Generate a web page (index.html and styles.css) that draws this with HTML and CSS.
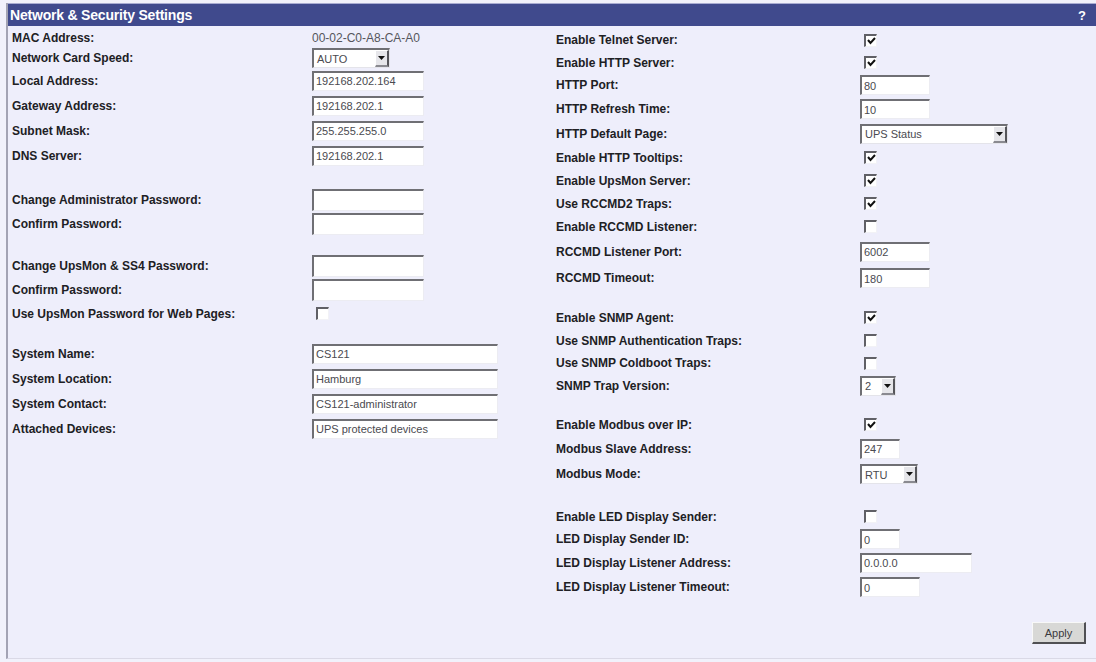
FILE: index.html
```html
<!DOCTYPE html>
<html>
<head>
<meta charset="utf-8">
<title>Network &amp; Security Settings</title>
<link rel="stylesheet" href="styles.css">
</head>
<body>
<div class="panel">
  <div class="titlebar">
    <span class="title">Network &amp; Security Settings</span>
    <span class="help">?</span>
  </div>
  <div class="content">
    <div class="col col-left">
      <div class="row h20"><span class="label">MAC Address:</span><span class="static">00-02-C0-A8-CA-A0</span></div>
      <div class="row h20"><span class="label">Network Card Speed:</span>
        <div class="select w78"><span class="sel-text">AUTO</span><span class="sel-btn"><svg width="7" height="4" viewBox="0 0 7 4"><polygon points="0,0 7,0 3.5,4" fill="#111"/></svg></span></div></div>
      <div class="row h25"><span class="label">Local Address:</span><input class="field w112" type="text" value="192168.202.164"></div>
      <div class="row h25"><span class="label">Gateway Address:</span><input class="field w112" type="text" value="192168.202.1"></div>
      <div class="row h25"><span class="label">Subnet Mask:</span><input class="field w112" type="text" value="255.255.255.0"></div>
      <div class="row h25"><span class="label">DNS Server:</span><input class="field w112" type="text" value="192168.202.1"></div>
      <div class="sp20"></div>
      <div class="row h24"><span class="label">Change Administrator Password:</span><input class="field w112 tall" type="password" value=""></div>
      <div class="row h24"><span class="label">Confirm Password:</span><input class="field w112 tall" type="password" value=""></div>
      <div class="sp18"></div>
      <div class="row h24"><span class="label">Change UpsMon &amp; SS4 Password:</span><input class="field w112 tall" type="password" value=""></div>
      <div class="row h24"><span class="label">Confirm Password:</span><input class="field w112 tall" type="password" value=""></div>
      <div class="row h23"><span class="label">Use UpsMon Password for Web Pages:</span><span class="cb"></span></div>
      <div class="sp16"></div>
      <div class="row h25"><span class="label">System Name:</span><input class="field w186" type="text" value="CS121"></div>
      <div class="row h25"><span class="label">System Location:</span><input class="field w186" type="text" value="Hamburg"></div>
      <div class="row h25"><span class="label">System Contact:</span><input class="field w186" type="text" value="CS121-administrator"></div>
      <div class="row h25"><span class="label">Attached Devices:</span><input class="field w186" type="text" value="UPS protected devices"></div>
    </div>
    <div class="col col-right">
      <div class="row h24"><span class="label">Enable Telnet Server:</span><span class="cb checked"><svg width="9" height="8" viewBox="0 0 9 8"><polyline points="1,3 3.5,6 8,1" fill="none" stroke="#111" stroke-width="2"/></svg></span></div>
      <div class="row h21"><span class="label">Enable HTTP Server:</span><span class="cb checked"><svg width="9" height="8" viewBox="0 0 9 8"><polyline points="1,3 3.5,6 8,1" fill="none" stroke="#111" stroke-width="2"/></svg></span></div>
      <div class="row h24"><span class="label">HTTP Port:</span><input class="field w70" type="text" value="80"></div>
      <div class="row h24"><span class="label">HTTP Refresh Time:</span><input class="field w70" type="text" value="10"></div>
      <div class="row h25"><span class="label">HTTP Default Page:</span>
        <div class="select w148"><span class="sel-text">UPS Status</span><span class="sel-btn"><svg width="7" height="4" viewBox="0 0 7 4"><polygon points="0,0 7,0 3.5,4" fill="#111"/></svg></span></div></div>
      <div class="row h23"><span class="label">Enable HTTP Tooltips:</span><span class="cb checked"><svg width="9" height="8" viewBox="0 0 9 8"><polyline points="1,3 3.5,6 8,1" fill="none" stroke="#111" stroke-width="2"/></svg></span></div>
      <div class="row h23"><span class="label">Enable UpsMon Server:</span><span class="cb checked"><svg width="9" height="8" viewBox="0 0 9 8"><polyline points="1,3 3.5,6 8,1" fill="none" stroke="#111" stroke-width="2"/></svg></span></div>
      <div class="row h23"><span class="label">Use RCCMD2 Traps:</span><span class="cb checked"><svg width="9" height="8" viewBox="0 0 9 8"><polyline points="1,3 3.5,6 8,1" fill="none" stroke="#111" stroke-width="2"/></svg></span></div>
      <div class="row h23"><span class="label">Enable RCCMD Listener:</span><span class="cb"></span></div>
      <div class="row h27"><span class="label">RCCMD Listener Port:</span><input class="field w70" type="text" value="6002"></div>
      <div class="row h26"><span class="label">RCCMD Timeout:</span><input class="field w70" type="text" value="180"></div>
      <div class="sp15"></div>
      <div class="row h23"><span class="label">Enable SNMP Agent:</span><span class="cb checked"><svg width="9" height="8" viewBox="0 0 9 8"><polyline points="1,3 3.5,6 8,1" fill="none" stroke="#111" stroke-width="2"/></svg></span></div>
      <div class="row h23"><span class="label">Use SNMP Authentication Traps:</span><span class="cb"></span></div>
      <div class="row h22"><span class="label">Use SNMP Coldboot Traps:</span><span class="cb"></span></div>
      <div class="row h23"><span class="label">SNMP Trap Version:</span>
        <div class="select w36"><span class="sel-text">2</span><span class="sel-btn"><svg width="7" height="4" viewBox="0 0 7 4"><polygon points="0,0 7,0 3.5,4" fill="#111"/></svg></span></div></div>
      <div class="sp16"></div>
      <div class="row h23"><span class="label">Enable Modbus over IP:</span><span class="cb checked"><svg width="9" height="8" viewBox="0 0 9 8"><polyline points="1,3 3.5,6 8,1" fill="none" stroke="#111" stroke-width="2"/></svg></span></div>
      <div class="row h25"><span class="label">Modbus Slave Address:</span><input class="field w40" type="text" value="247"></div>
      <div class="row h26"><span class="label">Modbus Mode:</span>
        <div class="select w58"><span class="sel-text">RTU</span><span class="sel-btn"><svg width="7" height="4" viewBox="0 0 7 4"><polygon points="0,0 7,0 3.5,4" fill="#111"/></svg></span></div></div>
      <div class="sp18"></div>
      <div class="row h23"><span class="label">Enable LED Display Sender:</span><span class="cb"></span></div>
      <div class="row h22"><span class="label">LED Display Sender ID:</span><input class="field w40" type="text" value="0"></div>
      <div class="row h25"><span class="label">LED Display Listener Address:</span><input class="field w112" type="text" value="0.0.0.0"></div>
      <div class="row h24"><span class="label">LED Display Listener Timeout:</span><input class="field w60" type="text" value="0"></div>
      <div class="actions"><button class="btn" type="button">Apply</button></div>
    </div>
  </div>
</div>
</body>
</html>
```
FILE: styles.css
```css
html, body {
  margin: 0;
  padding: 0;
  background: #f1f1fb;
}
body {
  font-family: "Liberation Sans", Arial, sans-serif;
  width: 1096px;
  height: 662px;
  overflow: hidden;
}
.panel {
  margin: 3px 0 0 6px;
  height: 656px;
  box-sizing: border-box;
  background: #eeeefb;
  border-left: 2px solid #a3a3b4;
  border-bottom: 1px solid #dad9e6;
  display: flex;
  flex-direction: column;
}
.titlebar {
  height: 22px;
  border-top: 1px solid #a9acd2;
  background: #404a8d;
  display: flex;
  align-items: center;
  justify-content: space-between;
  padding: 0 10px 0 2px;
  color: #fff;
  font-weight: bold;
}
.title {
  font-size: 14px;
  letter-spacing: -0.2px;
}
.help {
  font-size: 13px;
}
.content {
  display: flex;
  padding: 2px 0 0 4px;
}
.col {
  display: flex;
  flex-direction: column;
}
.col-left {
  width: 544px;
}
.col-left .label {
  width: 300px;
}
.col-right {
  flex: 1;
  padding-right: 10px;
}
.col-right .label {
  width: 304px;
}
.row {
  display: flex;
  align-items: center;
}
.label {
  flex: none;
  font-size: 12px;
  font-weight: bold;
  color: #202024;
  white-space: nowrap;
}
.h20 { height: 20px; }
.h21 { height: 21px; }
.h22 { height: 22px; }
.h23 { height: 23px; }
.h24 { height: 24px; }
.h25 { height: 25px; }
.h26 { height: 26px; }
.h27 { height: 27px; }
.sp15 { height: 15px; }
.sp16 { height: 16px; }
.sp18 { height: 18px; }
.sp20 { height: 20px; }

.static {
  font-size: 12px;
  color: #55565c;
}

.field {
  box-sizing: border-box;
  height: 20px;
  margin: 0;
  padding: 0 0 0 2px;
  background: #ffffff;
  border-top: 2px solid #6f6f74;
  border-left: 2px solid #6f6f74;
  border-right: 1px solid #ececf2;
  border-bottom: 1px solid #ececf2;
  font-family: "Liberation Sans", Arial, sans-serif;
  font-size: 11px;
  color: #4a4a50;
  outline: none;
}
.field.tall { height: 22px; }
.w36 { width: 36px; }
.w40 { width: 40px; }
.w58 { width: 58px; }
.w60 { width: 60px; }
.w70 { width: 70px; }
.w78 { width: 78px; }
.w112 { width: 112px; }
.w148 { width: 148px; }
.w186 { width: 186px; }

.select {
  box-sizing: border-box;
  height: 20px;
  display: flex;
  align-items: stretch;
  background: #ffffff;
  border-top: 2px solid #6f6f74;
  border-left: 2px solid #6f6f74;
  border-right: 1px solid #e4e4ea;
  border-bottom: 1px solid #e4e4ea;
}
.sel-text {
  flex: 1;
  font-size: 11px;
  color: #4a4a50;
  padding-left: 3px;
  display: flex;
  align-items: center;
  overflow: hidden;
}
.sel-btn {
  width: 14px;
  box-sizing: border-box;
  background: #e6e6ea;
  border-top: 1px solid #ffffff;
  border-left: 1px solid #ffffff;
  border-right: 2px solid #55555a;
  border-bottom: 2px solid #8a8a90;
  display: flex;
  align-items: center;
  justify-content: center;
}

.cb {
  box-sizing: border-box;
  width: 13px;
  height: 13px;
  margin-left: 4px;
  background: #ffffff;
  border-top: 2px solid #606066;
  border-left: 2px solid #606066;
  border-right: 1px solid #f2f2f6;
  border-bottom: 1px solid #f2f2f6;
  display: flex;
  align-items: center;
  justify-content: center;
}

.actions {
  display: flex;
  justify-content: flex-end;
  margin-top: 23px;
}
.btn {
  width: 54px;
  height: 22px;
  margin: 0;
  padding: 0;
  background: #d8d8d6;
  border-top: 1px solid #f8f8f8;
  border-left: 1px solid #f8f8f8;
  border-right: 2px solid #505054;
  border-bottom: 2px solid #505054;
  font-family: "Liberation Sans", Arial, sans-serif;
  font-size: 11px;
  color: #3a3a3e;
}
```
